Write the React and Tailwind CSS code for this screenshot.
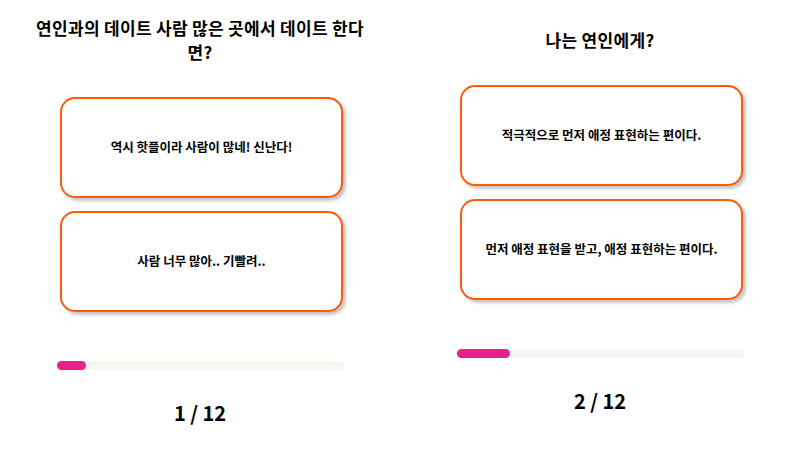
import React from "react";

const questions = [
  {
    title: "연인과의 데이트 사람 많은 곳에서 데이트 한다면?",
    answers: ["역시 핫플이라 사람이 많네! 신난다!", "사람 너무 많아.. 기빨려.."],
    step: 1,
    fill: "w-[29px]",
  },
  {
    title: "나는 연인에게?",
    answers: ["적극적으로 먼저 애정 표현하는 편이다.", "먼저 애정 표현을 받고, 애정 표현하는 편이다."],
    step: 2,
    fill: "w-[53px]",
  },
];

function QuestionPanel({ q }) {
  return (
    <div className="w-1/2 h-[450px] flex flex-col items-center justify-center pb-[7px]">
      <h1 className="w-[345px] text-center text-[17px] leading-[24px] font-bold text-black tracking-[0.3px]">
        {q.title}
      </h1>

      {/* answers */}
      <div className="mt-[33px] flex flex-col gap-[13px]">
        {q.answers.map((a) => (
          <button
            key={a}
            className="w-[283px] h-[101px] ml-[3px] flex items-center justify-center bg-white border-2 border-[#ff5a0a] rounded-[15px] shadow-[3px_3px_3px_rgba(0,0,0,0.22)] text-[12.5px] font-bold text-black"
          >
            {a}
          </button>
        ))}
      </div>

      {/* progress */}
      <div className="mt-[49px] w-[287px] h-[9px] rounded-full bg-[#f9f6f1]">
        <div className={`${q.fill} h-full rounded-full bg-[#e6218a]`} />
      </div>

      <div className="mt-[29px] text-[20px] leading-[28px] font-bold text-black">
        {q.step} / 12
      </div>
    </div>
  );
}

export default function App() {
  return (
    <div
      className="w-[800px] h-[450px] flex bg-white"
      style={{ fontFamily: '"Noto Sans CJK KR", "Noto Sans", sans-serif' }}
    >
      {questions.map((q) => (
        <QuestionPanel key={q.step} q={q} />
      ))}
    </div>
  );
}
